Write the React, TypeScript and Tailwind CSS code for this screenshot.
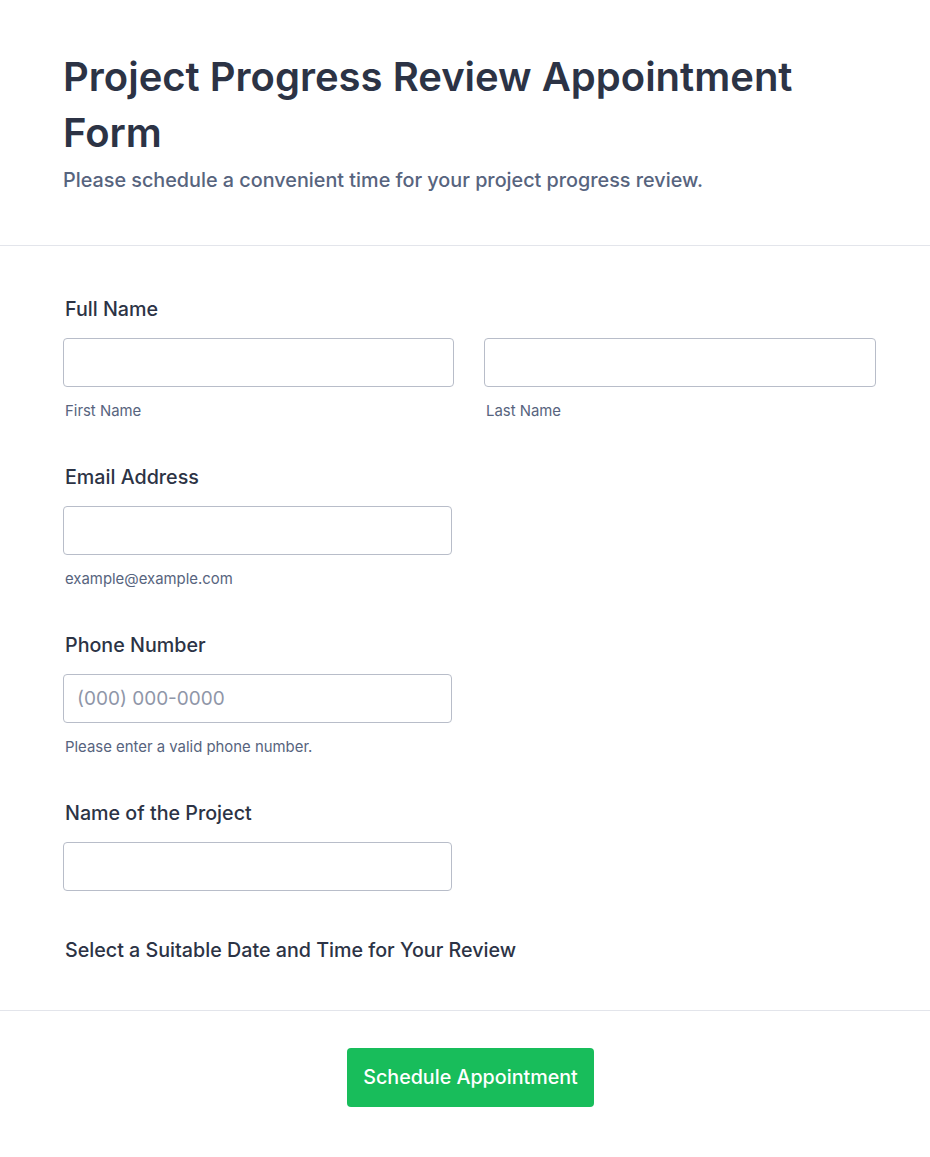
import React from "react";

function Label({ children }: { children: React.ReactNode }) {
  return (
    <div className="pl-[2px] text-[19.7px] leading-[24px] font-medium text-[#2c3345]">{children}</div>
  );
}

function Sub({ children }: { children: React.ReactNode }) {
  return <div className="mt-[14px] pl-[2px] text-[14.9px] leading-[20px] text-[#57647e]">{children}</div>;
}

function Input({ placeholder, className = "" }: { placeholder?: string; className?: string }) {
  return (
    <input
      placeholder={placeholder}
      className={
        "mt-[17px] block h-[49px] rounded-[4px] border border-[#b8bdc9] bg-white px-[13px] text-[19px] text-[#2c3345] placeholder:text-[#8f96a8] outline-none " +
        className
      }
    />
  );
}

export default function App() {
  return (
    <div className="min-h-[1157px] bg-white" style={{ fontFamily: "Inter, 'Noto Sans', sans-serif" }}>
      <div className="px-[63px] pt-[49px] pb-[53px]">
        <h1 className="text-[40px] leading-[56px] font-semibold text-[#2c3345]">
          Project Progress Review Appointment Form
        </h1>
        <p className="mt-[7px] text-[19.8px] leading-[24px] font-medium text-[#57647e]">
          Please schedule a convenient time for your project progress review.
        </p>
      </div>
      <div className="h-px bg-[#e3e5eb]" />
      <div className="px-[63px] pt-[51px] pb-[48px]">
        <Label>Full Name</Label>
        <div className="flex gap-[30px]">
          <div className="w-[391px]">
            <Input className="w-[391px]" />
            <Sub>First Name</Sub>
          </div>
          <div className="w-[392px]">
            <Input className="w-[392px]" />
            <Sub>Last Name</Sub>
          </div>
        </div>

        <div className="mt-[44px]">
          <Label>Email Address</Label>
          <Input className="w-[389px]" />
          <Sub>example@example.com</Sub>
        </div>

        <div className="mt-[44px]">
          <Label>Phone Number</Label>
          <Input className="w-[389px]" placeholder="(000) 000-0000" />
          <Sub>Please enter a valid phone number.</Sub>
        </div>

        <div className="mt-[44px]">
          <Label>Name of the Project</Label>
          <Input className="w-[389px]" />
        </div>

        <div className="mt-[47px]">
          <Label>Select a Suitable Date and Time for Your Review</Label>
        </div>
      </div>
      <div className="h-px bg-[#e3e5eb]" />
      <div className="flex justify-center pl-[11px] pt-[37px] pb-[50px]">
        <button className="h-[59px] w-[247px] rounded-[4px] bg-[#18bd5b] text-[19.7px] font-medium text-white">
          Schedule Appointment
        </button>
      </div>
    </div>
  );
}
